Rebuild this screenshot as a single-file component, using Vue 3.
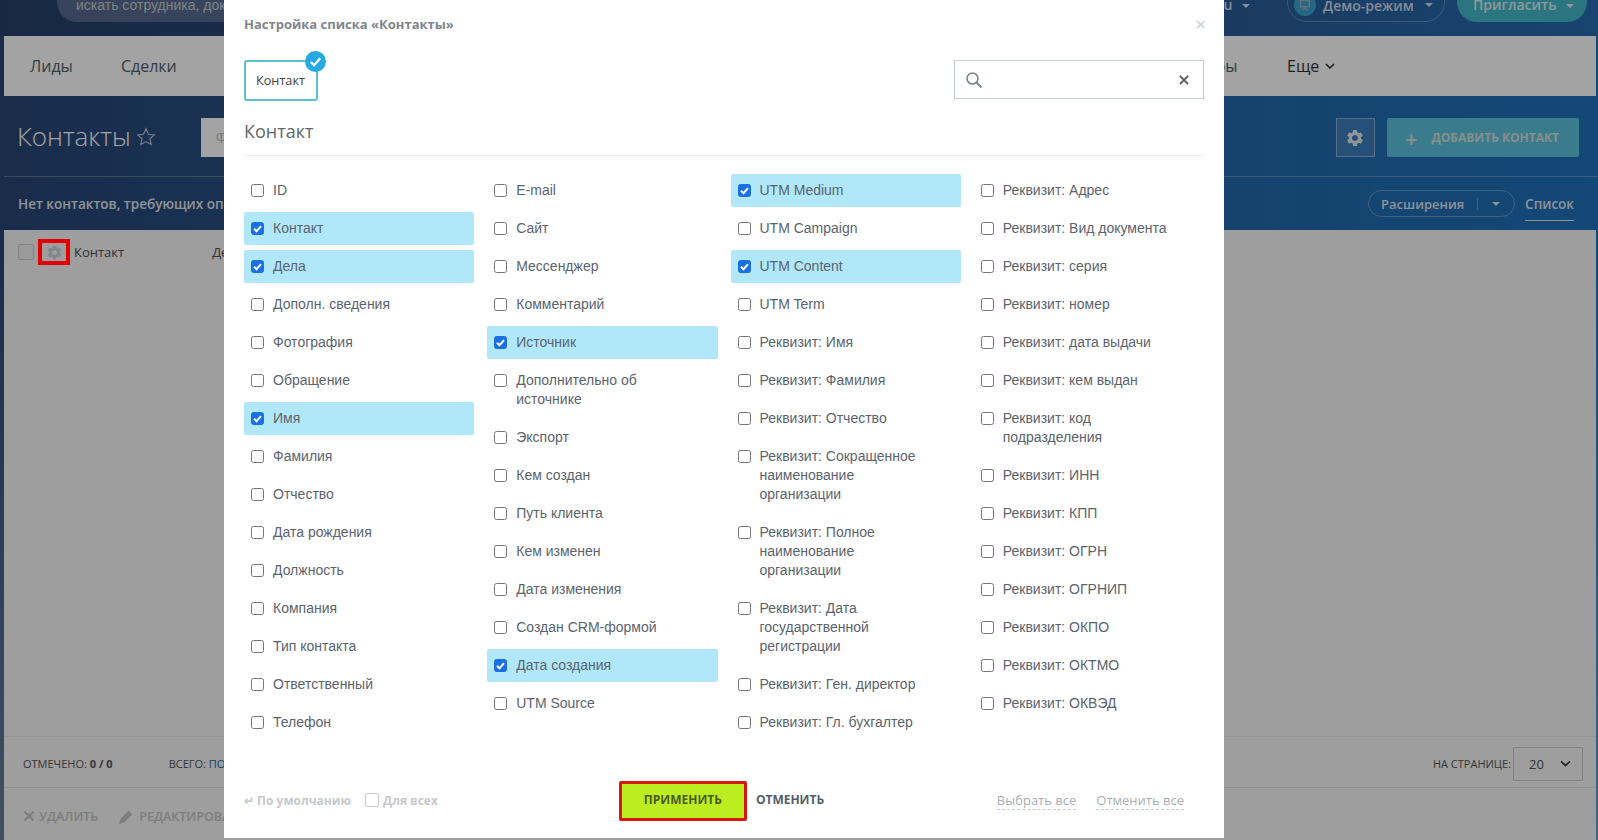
<script setup>
const gear = 'M19.14 12.94c.04-.3.06-.61.06-.94 0-.32-.02-.64-.07-.94l2.03-1.58a.49.49 0 0 0 .12-.61l-1.92-3.32a.488.488 0 0 0-.59-.22l-2.39.96c-.5-.38-1.03-.7-1.62-.94l-.36-2.54a.484.484 0 0 0-.48-.41h-3.84c-.24 0-.43.17-.47.41l-.36 2.54c-.59.24-1.13.57-1.62.94l-2.39-.96c-.22-.08-.47 0-.59.22L2.74 8.87c-.12.21-.08.47.12.61l2.03 1.58c-.05.3-.09.63-.09.94s.02.64.07.94l-2.03 1.58a.49.49 0 0 0-.12.61l1.92 3.32c.12.22.37.29.59.22l2.39-.96c.5.38 1.03.7 1.62.94l.36 2.54c.05.24.24.41.48.41h3.84c.24 0 .44-.17.47-.41l.36-2.54c.59-.24 1.13-.56 1.62-.94l2.39.96c.22.08.47 0 .59-.22l1.92-3.32c.12-.22.07-.47-.12-.61l-2.01-1.58zM12 15.6c-1.98 0-3.6-1.62-3.6-3.6s1.62-3.6 3.6-3.6 3.6 1.62 3.6 3.6-1.62 3.6-3.6 3.6z'
const c = (label) => ({ label, on: true })
const u = (label) => ({ label, on: false })
const columns = [
  [u('ID'), c('Контакт'), c('Дела'), u('Дополн. сведения'), u('Фотография'), u('Обращение'), c('Имя'), u('Фамилия'), u('Отчество'), u('Дата рождения'), u('Должность'), u('Компания'), u('Тип контакта'), u('Ответственный'), u('Телефон')],
  [u('E-mail'), u('Сайт'), u('Мессенджер'), u('Комментарий'), c('Источник'), u('Дополнительно об источнике'), u('Экспорт'), u('Кем создан'), u('Путь клиента'), u('Кем изменен'), u('Дата изменения'), u('Создан CRM-формой'), c('Дата создания'), u('UTM Source')],
  [c('UTM Medium'), u('UTM Campaign'), c('UTM Content'), u('UTM Term'), u('Реквизит: Имя'), u('Реквизит: Фамилия'), u('Реквизит: Отчество'), u('Реквизит: Сокращенное наименование организации'), u('Реквизит: Полное наименование организации'), u('Реквизит: Дата государственной регистрации'), u('Реквизит: Ген. директор'), u('Реквизит: Гл. бухгалтер')],
  [u('Реквизит: Адрес'), u('Реквизит: Вид документа'), u('Реквизит: серия'), u('Реквизит: номер'), u('Реквизит: дата выдачи'), u('Реквизит: кем выдан'), u('Реквизит: код подразделения'), u('Реквизит: ИНН'), u('Реквизит: КПП'), u('Реквизит: ОГРН'), u('Реквизит: ОГРНИП'), u('Реквизит: ОКПО'), u('Реквизит: ОКТМО'), u('Реквизит: ОКВЭД')],
]
</script>

<template>
  <div class="page">
    <header class="top">
      <div class="search-pill">искать сотрудника, документ</div>
      <div class="top-right">
        <span class="user">u <i class="caret"></i></span>
        <span class="demo"><span class="demo-ico"><svg viewBox="0 0 16 16" width="14" height="14"><path d="M3 3h10v7H3zM8 10v2M5 14l3-2 3 2" fill="none" stroke="#9fb2bf" stroke-width="1.6"/></svg></span>Демо-режим <i class="caret"></i></span>
        <span class="invite">Пригласить <i class="caret"></i></span>
      </div>
    </header>
    <nav class="menu">
      <span class="mi">Лиды</span><span class="mi">Сделки</span>
      <span class="mi more">Еще
        <svg viewBox="0 0 10 6" width="10" height="6"><path d="M1 1l4 4 4-4" fill="none" stroke="#333" stroke-width="1.6"/></svg>
      </span>
      <span class="mi goods">Товары</span>
    </nav>
    <section class="title-row">
      <h1>Контакты</h1>
      <svg class="star" viewBox="0 0 24 24" width="22" height="22"><path d="M12 3l2.7 6 6.3.7-4.7 4.3 1.3 6.3L12 17l-5.600 3.300L7.700 14 3 9.700 9.300 9z" fill="none" stroke="#b6c4d4" stroke-width="1.300"/></svg>
      <div class="filter">Фильтр + поиск</div>
      <button class="gear-btn"><svg viewBox="0 0 24 24" width="20" height="20"><path :d="gear" fill="#e4e9ee"/></svg></button>
      <button class="add-btn"><span class="plus">+</span>ДОБАВИТЬ КОНТАКТ</button>
    </section>
    <section class="sub-row">
      <span class="notice">Нет контактов, требующих операций</span>
      <span class="ext">Расширения<i class="sep"></i><i class="caret"></i></span>
      <span class="list-tab">Список</span>
    </section>
    <main class="content">
      <div class="thead">
        <span class="t-check"></span>
        <span class="t-gear"><svg viewBox="0 0 24 24" width="17" height="17"><path :d="gear" fill="#7f858b"/></svg></span>
        <span class="t-col">Контакт</span>
        <span class="t-col t-col2">Дела</span>
      </div>
      <div class="spacer"></div>
      <div class="foot1">
        <span>ОТМЕЧЕНО: <b>0 / 0</b></span>
        <span class="total">ВСЕГО: <em>ПОКАЗАТЬ</em></span>
        <span class="per">НА СТРАНИЦЕ:</span>
        <span class="per-sel">20 <svg viewBox="0 0 10 6" width="11" height="7"><path d="M1 1l4 4 4-4" fill="none" stroke="#333" stroke-width="1.500"/></svg></span>
      </div>
      <div class="foot2">
        <span class="act">
          <svg viewBox="0 0 12 12" width="12" height="12"><path d="M1.500 1.500l9 9M10.500 1.500l-9 9" stroke="#c4c4c4" stroke-width="2.400"/></svg>
          УДАЛИТЬ</span>
        <span class="act">
          <svg viewBox="0 0 16 16" width="17" height="17"><path d="M1 15l1.500-5L10 2.500l3.500 3.500L6 13.500z" fill="#c4c4c4"/></svg>
          РЕДАКТИРОВАТЬ</span>
      </div>
    </main>

    <div class="overlay"></div>

    <div class="modal">
      <div class="m-title">Настройка списка «Контакты»<span class="m-close">×</span></div>
      <div class="m-tools">
        <div class="chip">Контакт
          <span class="chip-badge"><svg viewBox="0 0 20 20" width="21" height="21"><path d="M5.500 10.500l3 3 6-6.500" fill="none" stroke="#fff" stroke-width="2.200"/></svg></span>
        </div>
        <div class="m-search">
          <svg viewBox="0 0 18 18" width="18" height="18"><circle cx="7.500" cy="7.500" r="5.500" fill="none" stroke="#7d868c" stroke-width="1.600"/><path d="M11.500 11.500l5 5" stroke="#7d868c" stroke-width="2"/></svg>
          <svg viewBox="0 0 10 10" width="10" height="10"><path d="M1 1l8 8M9 1l-8 8" stroke="#5b6167" stroke-width="1.800"/></svg>
        </div>
      </div>
      <h2 class="m-head">Контакт</h2>
      <div class="m-grid">
        <div v-for="(col, i) in columns" :key="i" class="m-col">
          <div v-for="item in col" :key="item.label" class="m-row" :class="{ on: item.on }">
            <span class="box">
              <svg v-if="item.on" viewBox="0 0 13 13" width="13" height="13"><path d="M3 6.700l2.500 2.500 4.500-5" fill="none" stroke="#fff" stroke-width="2"/></svg>
            </span>
            <span class="lbl">{{ item.label }}</span>
          </div>
        </div>
      </div>
      <div class="m-foot">
        <div class="f-left">
          <span class="f-def">↵ По умолчанию</span>
          <span class="f-all"><i class="f-box"></i>Для всех</span>
        </div>
        <div class="f-mid">
          <button class="apply">ПРИМЕНИТЬ</button>
          <button class="cancel">ОТМЕНИТЬ</button>
        </div>
        <div class="f-right">
          <span class="dash">Выбрать все</span>
          <span class="dash">Отменить все</span>
        </div>
      </div>
    </div>
  </div>
</template>

<style>
html, body { margin: 0; padding: 0; overflow: hidden; }
</style>

<style scoped>
.page { position: relative; width: 1598px; height: 840px; overflow: hidden; font-family: "Open Sans", "Liberation Sans", sans-serif; background: linear-gradient(180deg, rgba(255,255,255,0) 30%, rgba(255,255,255,.3) 100%), linear-gradient(90deg, #284675 0%, #2a5a96 40%, #1f71ba 100%); display: flex; flex-direction: column; }
i { font-style: normal; }
.caret { display: inline-block; width: 0; height: 0; border: 4px solid transparent; border-top-color: currentColor; border-bottom: 0; vertical-align: middle; margin-left: 6px; }
.top { height: 36px; flex: none; position: relative; display: flex; align-items: flex-start; justify-content: space-between; padding-left: 57px; padding-right: 11px; box-sizing: border-box; background: linear-gradient(90deg, #263f6b 0%, #2a5086 60%, #276bb0 100%); }
.search-pill { width: 400px; height: 40px; margin-top: -18px; padding: 15px 19px 0; box-sizing: border-box; background: rgba(255,255,255,.22); border-radius: 20px; color: #c5ccd6; font-size: 14px; font-family: "Liberation Sans", sans-serif; white-space: nowrap; }
.top-right { display: flex; align-items: flex-start; gap: 12px; margin-top: -18px; height: 40px; font-family: "Open Sans", sans-serif; font-size: 14px; font-weight: 600; color: #cfdcea; }
.user { margin-right: 25px; padding-top: 13px; }
.demo { display: flex; align-items: center; gap: 7px; height: 40px; width: 158px; box-sizing: border-box; padding: 6px 8px 0 6px; border: 1px solid rgba(255,255,255,.25); border-radius: 20px; }
.demo .caret { margin-left: 4px; }
.demo-ico { width: 22px; height: 22px; border-radius: 50%; background: #3aa2cf; display: flex; align-items: center; justify-content: center; }
.invite { height: 40px; width: 130px; box-sizing: border-box; padding: 13px 0 0 16px; border-radius: 20px; background: #42b8c8; color: #dfeef2; white-space: nowrap; }
.menu { height: 60px; flex: none; margin: 0 2px 0 4px; background: #fff; display: flex; align-items: center; padding-left: 26px; font-family: "Open Sans", sans-serif; font-size: 16px; color: #535c69; }
.mi { margin-right: 48px; }
.more { position: absolute; left: 1287px; margin: 0; display: flex; align-items: center; gap: 6px; color: #333; }
.goods { position: absolute; left: 1179px; margin: 0; }
.title-row { height: 81px; flex: none; margin: 0 0 0 4px; padding: 3px 19px 0 13px; box-sizing: border-box; display: flex; align-items: center; border-bottom: 1px solid rgba(255,255,255,.25); }
h1 { margin: -3px 0 0; font-family: "Open Sans", sans-serif; font-weight: 300; font-size: 26px; color: #fff; }
.star { margin-left: 4px; margin-top: -2px; }
.filter { width: 100px; height: 39px; margin-left: 44px; background: #fff; padding-left: 15px; box-sizing: border-box; font: 14px/39px "Open Sans", sans-serif; color: #bcc0c6; white-space: nowrap; overflow: hidden; }
.gear-btn { margin-left: auto; width: 39px; height: 39px; border: 1px solid rgba(255,255,255,.4); background: rgba(255,255,255,.12); display: flex; align-items: center; justify-content: center; padding: 0 1px 0 0; }
.add-btn { margin-left: 12px; width: 192px; height: 39px; border: 0; background: #5cc3dc; border-radius: 2px; color: #d6dee0; font: 700 12px "Open Sans", sans-serif; display: flex; align-items: center; padding: 0 0 0 18px; }
.plus { font-size: 22px; font-weight: 600; margin-right: 14px; }
.sub-row { height: 53px; flex: none; margin-left: 4px; padding: 0 24px 0 14px; box-sizing: border-box; display: flex; align-items: center; color: #dfe5ec; font-size: 14px; font-weight: 600; }
.notice { font-family: "Open Sans", sans-serif; font-size: 13.500px; }
.ext { margin-left: auto; height: 27px; width: 147px; box-sizing: border-box; border: 1px solid rgba(255,255,255,.3); border-radius: 14px; display: flex; align-items: center; padding-left: 12px; font-size: 13px; }
.sep { width: 1px; height: 12px; background: rgba(255,255,255,.3); margin-left: 13px; margin-right: 8px; }
.list-tab { margin-left: 10px; padding: 4px 0 7px; margin-top: 5px; border-bottom: 1px solid #dfe5ec; font-size: 13.500px; line-height: 18px; }
.content { flex: 1; margin: 0 2px 0 4px; background: #f7f7f7; display: flex; flex-direction: column; min-height: 0; font-family: "Open Sans", sans-serif; color: #333; }
.thead { height: 44px; flex: none; display: flex; align-items: center; padding: 0 0 0 14px; font-size: 13px; color: #4a4f55; }
.t-check { width: 14px; height: 14px; border: 1px solid #ccc; border-radius: 2px; background: #f2f2f2; }
.t-gear { width: 32px; height: 26px; margin-left: 4px; box-sizing: border-box; border: 4px solid #e50000; display: flex; align-items: center; justify-content: center; position: relative; z-index: 20; }
.t-col { margin-left: 4px; margin-top: -1px; }
.t-col2 { margin-left: 88px; }
.spacer { flex: 1; }
.foot1 { height: 52px; flex: none; display: flex; align-items: center; box-sizing: border-box; padding: 3px 13px 0 19px; border-top: 1px solid #eaeaea; border-bottom: 1px solid #e2e2e2; font-size: 11px; color: #555; }
.total { margin-left: 56px; }
.total em { font-style: normal; color: #2067b0; }
.per { margin-left: auto; }
.per-sel { margin-left: 2px; width: 70px; height: 34px; box-sizing: border-box; border: 1px solid #ccc; display: flex; align-items: center; justify-content: space-between; padding: 0 11px 0 15px; font-size: 13px; }
.foot2 { height: 52px; flex: none; display: flex; align-items: center; gap: 20px; padding: 4px 0 0 19px; box-sizing: border-box; font-size: 12.500px; font-weight: 600; color: #c4c4c4; }
.act { display: flex; align-items: center; gap: 4px; }
.overlay { position: absolute; inset: 0; background: rgba(0,0,0,.36); }
.modal { position: absolute; left: 224px; top: 0; width: 1000px; height: 838px; background: #fff; padding: 0 20px; box-sizing: border-box; display: flex; flex-direction: column; font-family: "Liberation Sans", sans-serif; }
.m-title { height: 48px; flex: none; font: 700 13px/48px "Open Sans", sans-serif; color: #80868e; position: relative; }
.m-close { position: absolute; right: -2px; top: 0; color: #c8ccd0; font-size: 19px; font-weight: 400; }
.m-tools { height: 60px; flex: none; margin-top: 12px; display: flex; justify-content: space-between; align-items: flex-start; }
.chip { position: relative; width: 74px; height: 41px; box-sizing: border-box; border: 2px solid #5cc2d0; border-radius: 3px; font: 12.700px/37px "Open Sans", sans-serif; color: #444; padding-left: 10px; }
.chip-badge { position: absolute; right: -10px; top: -11px; width: 21px; height: 21px; border-radius: 50%; background: #24a9e0; display: block; }
.chip-badge svg { display: block; }
.m-search { width: 250px; height: 39px; box-sizing: border-box; border: 1px solid #c6cdd3; display: flex; align-items: center; justify-content: space-between; padding: 0 14px 0 10px; }
.m-head { margin: -2px 0 0; height: 38px; flex: none; box-sizing: border-box; border-bottom: 1px solid #e9ecee; font: 400 18px/26px "Open Sans", sans-serif; color: #5e6770; }
.m-grid { display: grid; grid-template-columns: repeat(4, 1fr); column-gap: 13px; padding-top: 18px; flex: 1; align-items: start; min-height: 0; }
.m-col { display: flex; flex-direction: column; gap: 5px; }
.m-row { display: flex; align-items: flex-start; gap: 9px; padding: 7px 28px 7px 7px; border-radius: 2px; font-size: 14px; line-height: 19px; color: #5b636e; }
.m-row.on { background: #b0e8fa; }
.box { flex: none; width: 13px; height: 13px; margin-top: 3px; box-sizing: border-box; border: 1px solid #767676; border-radius: 2.500px; background: #fff; position: relative; }
.box svg { display: block; margin: -1px; }
.on .box { background: #1a6fe3; border-color: #1a6fe3; }
.m-foot { height: 77px; flex: none; display: grid; grid-template-columns: 1fr auto 1fr; align-items: center; }
.f-left { display: flex; align-items: center; gap: 14px; font: 700 12px "Open Sans", sans-serif; color: #c6c9cc; padding-top: 2px; }
.f-all { display: flex; align-items: center; gap: 4px; margin-top: -1px; }
.f-box { width: 12px; height: 12px; border: 1px solid #c9cccf; border-radius: 2px; }
.f-mid { display: flex; align-items: flex-start; gap: 9px; margin-left: -5px; padding-top: 2px; }
.apply { width: 128px; height: 40px; box-sizing: border-box; border: 3px solid #d6180c; border-radius: 2px; background: #bbed21; font: 700 12px "Open Sans", sans-serif; color: #4a5a22; padding: 0 0 2px; }
.cancel { border: 0; background: none; height: 38px; padding: 0; font: 700 12px "Open Sans", sans-serif; color: #535c69; }
.f-right { display: flex; justify-content: flex-end; gap: 20px; padding: 2px 20px 0 0; font-family: "Open Sans", sans-serif; font-size: 13px; color: #a9aeb3; }
.dash { border-bottom: 1px dashed #c6cbd0; line-height: 17px; }
</style>
